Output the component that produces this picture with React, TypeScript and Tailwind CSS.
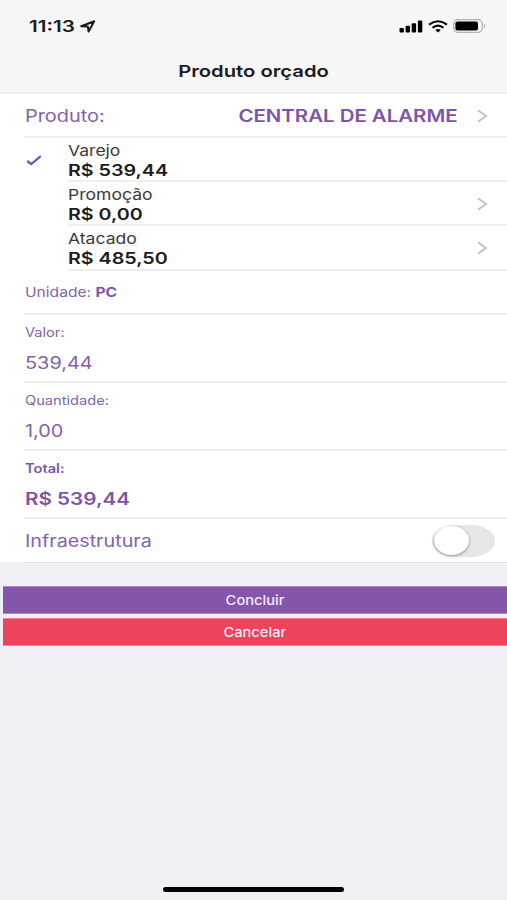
import React from "react";

const prices = [
  { label: "Varejo", value: "R$ 539,44", selected: true },
  { label: "Promoção", value: "R$ 0,00", selected: false },
  { label: "Atacado", value: "R$ 485,50", selected: false },
];

const fields = [
  { label: "Valor:", value: "539,44", bold: false },
  { label: "Quantidade:", value: "1,00", bold: false },
  { label: "Total:", value: "R$ 539,44", bold: true },
];

const Chevron: React.FC = () => (
  <svg className="mt-px h-4 w-3 shrink-0" viewBox="0 0 12 16" fill="none">
    <path d="M2 2.2L10 8L2 13.8" stroke="#c2c2c4" strokeWidth="1.9" />
  </svg>
);

const StatusBar: React.FC = () => (
  <div className="flex h-[52px] items-center justify-between pr-[21px] pl-[29px]">
    <div className="flex items-center">
      <span className="w-[51px] whitespace-nowrap text-[16px] font-semibold">
        <span className="inline-block origin-left scale-x-[1.29]">11:13</span>
      </span>
      <svg className="h-[13px] w-4" viewBox="0 0 16 13" fill="none">
        <path
          d="M1.2 6.3L14.2 1.2L8.6 11.5L7.8 6.4Z"
          stroke="#1c1c1e"
          strokeWidth="2"
          strokeLinejoin="round"
        />
      </svg>
    </div>
    <div className="flex items-center">
      <svg className="h-[13px] w-6" viewBox="0 0 24 13" fill="#000">
        <rect x="0.5" y="8" width="4.4" height="4.5" rx="1" />
        <rect x="6.6" y="5.8" width="4.4" height="6.7" rx="1" />
        <rect x="12.7" y="3.3" width="4.4" height="9.2" rx="1" />
        <rect x="18.9" y="0.5" width="4.4" height="12" rx="1" />
      </svg>
      <svg
        className="ml-[5px] h-[13px] w-5"
        viewBox="0 0 20 13"
        fill="none"
        stroke="#000"
        strokeWidth="2.1"
      >
        <path d="M1.1 4.6Q10 -2.1 18.9 4.6" />
        <path d="M4.5 7.8Q10 3.3 15.5 7.8" />
        <path d="M7.3 9.9Q10 7.9 12.7 9.9L10 12.4Z" fill="#000" stroke="none" />
      </svg>
      <svg className="ml-[5px] h-[14px] w-[33px]" viewBox="0 0 33 14">
        <rect
          x="0.7"
          y="0.7"
          width="28.6"
          height="12.6"
          rx="4"
          fill="none"
          stroke="#b0b0b0"
          strokeWidth="1.3"
        />
        <rect x="2.4" y="2.6" width="22.6" height="8.8" rx="2" fill="#000" />
        <path d="M31 4.8Q33.4 7 31 9.2Z" fill="#a0a0a0" />
      </svg>
    </div>
  </div>
);

export default function App() {
  return (
    <div className="flex h-[900px] w-[507px] flex-col overflow-hidden bg-[#f0eff5] font-['Inter','Liberation_Sans',sans-serif] text-[#1c1c1e]">
      <header className="h-[94px] shrink-0 border-b-2 border-[#ebebeb] bg-[#f6f6f6]">
        <StatusBar />
        <h1 className="flex h-[38px] items-center justify-center text-[16.5px] font-semibold">
          <span className="inline-block scale-x-[1.225]">Produto orçado</span>
        </h1>
      </header>

      <main className="bg-white text-[#8463a8]">
        <div className="ml-6 flex h-11 items-center border-b-2 border-[#efeff1] pr-[19px] pl-px">
          <span className="mt-[3px] inline-block origin-left scale-x-[1.17] text-[17px]">
            Produto:
          </span>
          <span className="mt-[3px] mr-[18px] ml-auto inline-block origin-right scale-x-[1.2] text-[17px] font-semibold text-[#7d54a8]">
            CENTRAL DE ALARME
          </span>
          <Chevron />
        </div>

        {prices.map((price) => (
          <div key={price.label} className="flex h-[44.2px] pl-6">
            <div className="flex w-11 items-center pl-[2px]">
              {price.selected && (
                <svg className="h-[11px] w-4" viewBox="0 0 16 11" fill="none">
                  <path
                    d="M1.2 6L5.2 9L14.8 1.2"
                    stroke="#7058a4"
                    strokeWidth="2.2"
                  />
                </svg>
              )}
            </div>
            <div className="flex flex-1 items-center border-b-2 border-[#efeff1] pr-[19px] text-[#1c1c1e]">
              <div className="flex flex-1 flex-col items-start pt-[2px]">
                <span className="origin-left scale-x-[1.17] text-[15px] leading-5 text-[#3a3a3c]">
                  {price.label}
                </span>
                <span className="origin-left scale-x-[1.23] text-[16px] leading-[19px] font-semibold">
                  {price.value}
                </span>
              </div>
              {!price.selected && <Chevron />}
            </div>
          </div>
        ))}

        <div className="ml-6 flex h-11 items-center border-b-2 border-[#efeff1] pl-px text-[13px]">
          <span className="mt-[2px] origin-left scale-x-[1.2]">
            Unidade: <b className="font-bold text-[#7d54a8]">PC</b>
          </span>
        </div>

        {fields.map((field) => (
          <div
            key={field.label}
            className={`ml-6 flex h-[68.2px] flex-col items-start border-b-2 border-[#efeff1] pt-2 pl-px ${
              field.bold ? "font-semibold text-[#7d54a8]" : ""
            }`}
          >
            <span className="origin-left scale-x-[1.17] text-[12.5px] leading-5">
              {field.label}
            </span>
            <span
              className={`mt-2 origin-left text-[17px] leading-6 ${
                field.bold ? "scale-x-[1.215]" : "scale-x-[1.17]"
              }`}
            >
              {field.value}
            </span>
          </div>
        ))}

        <div className="flex h-[43px] items-center pr-[12px] pl-[25px]">
          <span className="mt-[3px] origin-left scale-x-[1.16] text-[17px]">
            Infraestrutura
          </span>
          <button
            type="button"
            className="ml-auto flex h-8 w-[63px] items-center rounded-[24px/16px] bg-[#e6e6e6] pl-[2px]"
          >
            <span className="h-[29px] w-[35px] rounded-[50%] bg-white shadow-[0_1px_3px_rgba(0,0,0,0.4)]" />
          </button>
        </div>
      </main>

      <div className="ml-6 h-px shrink-0 bg-[#e2e2e6]" />

      <div className="mt-[23px] flex flex-col gap-1 pl-[3px] text-[13px] font-medium text-[#f4eafa]">
        <button
          type="button"
          className="h-7 border-y border-[#a78bc6] bg-[#8455aa] pt-[2px]"
        >
          <span className="inline-block scale-x-[1.13]">Concluir</span>
        </button>
        <button
          type="button"
          className="h-7 border-y border-[#f0808f] bg-[#ec445b] pt-px"
        >
          <span className="inline-block scale-x-[1.13]">Cancelar</span>
        </button>
      </div>

      <div className="mx-auto mt-auto mb-2 h-[5px] w-[181px] shrink-0 rounded-full bg-black" />
    </div>
  );
}
